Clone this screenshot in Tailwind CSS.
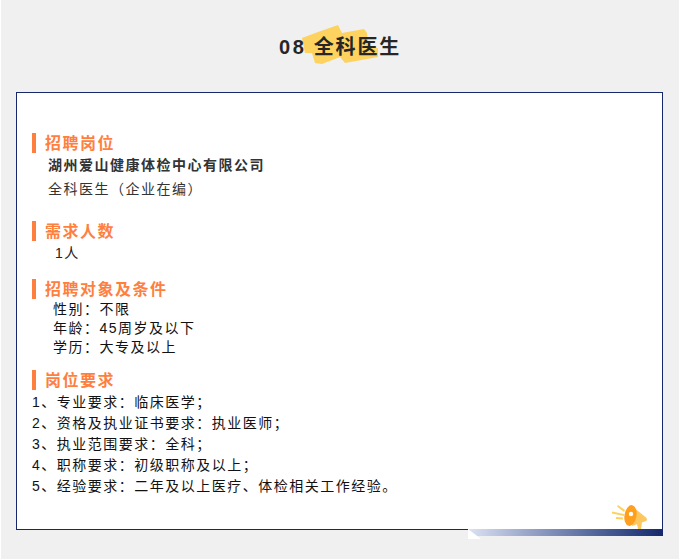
<!DOCTYPE html>
<html>
  <head>
    <meta charset="UTF-8" />
    <title>全科医生</title>
    <script src="https://cdn.jsdelivr.net/npm/@tailwindcss/browser@4"></script>
  </head>
  <body class="bg-[#f0f0f0] font-['Liberation_Sans','Noto_Sans_CJK_SC',sans-serif] overflow-hidden">
    <div class="h-[559px] w-[679px] border-l border-white pl-[15px] pr-[15px]">

      <!-- title -->
      <div class="relative h-[92px] pt-[32px] text-center">
        <svg class="absolute left-[286px] top-[24px]" width="82" height="42" viewBox="0 0 82 42">
          <path d="M0 14 L16 8 L36 1 L40 9 L62 5 L65 9 L66 24 L76 24 L76 33 L43 39 L38 33 L20 40 L13 39 L10 29 L3 29 Z" fill="#fdd25f" />
        </svg>
        <h1 class="relative text-[20px] leading-[30px] font-bold tracking-[1.8px] text-[#262626]"><span class="tracking-[2.6px]">08</span> 全科医生</h1>
      </div>

      <!-- card -->
      <div class="relative h-[438px] w-[647px] border border-[#16276b] bg-white pl-[15px] pt-[40px] text-[14px] tracking-[1.5px] text-[#222]">

        <h2 class="flex h-[20px] items-center border-l-4 border-[#ff7f3f] pl-[9px] pt-[1px] text-[16px] leading-[20px] font-bold tracking-[1.5px] text-[#ff7f3f]">招聘岗位</h2>
        <p class="pl-[16px] pt-[2px] leading-[20px] font-bold text-[#333]">湖州爱山健康体检中心有限公司</p>
        <p class="pl-[16px] pt-[4px] leading-[20px] text-[#333]">全科医生（企业在编）</p>

        <h2 class="mt-[22px] flex h-[20px] items-center border-l-4 border-[#ff7f3f] pl-[9px] pt-[1px] text-[16px] leading-[20px] font-bold tracking-[1.5px] text-[#ff7f3f]">需求人数</h2>
        <p class="pl-[23px] pt-[2px] leading-[20px]">1人</p>

        <h2 class="mt-[16px] flex h-[20px] items-center border-l-4 border-[#ff7f3f] pl-[9px] pt-[1px] text-[16px] leading-[20px] font-bold tracking-[1.5px] text-[#ff7f3f]">招聘对象及条件</h2>
        <div class="pl-[21px] pt-[1px] leading-[19px] text-[#111]">
          <p>性别：不限</p>
          <p>年龄：45周岁及以下</p>
          <p>学历：大专及以上</p>
        </div>

        <h2 class="mt-[13px] flex h-[20px] items-center border-l-4 border-[#ff7f3f] pl-[9px] pt-[1px] text-[16px] leading-[20px] font-bold tracking-[1.5px] text-[#ff7f3f]">岗位要求</h2>
        <div class="pt-[2px] leading-[21px] text-[#111]">
          <p>1、专业要求：临床医学；</p>
          <p>2、资格及执业证书要求：执业医师；</p>
          <p>3、执业范围要求：全科；</p>
          <p>4、职称要求：初级职称及以上；</p>
          <p>5、经验要求：二年及以上医疗、体检相关工作经验。</p>
        </div>

        <!-- megaphone -->
        <svg class="absolute right-[14px] bottom-0" width="36" height="26" viewBox="0 0 36 26">
          <path d="M21 4 L34 14.5 Q36 17 34 18 L20 23 Z" fill="#fdc65f" />
          <path d="M25 21 L30 19 L29 26 L26 26 Z" fill="#fdc65f" />
          <ellipse cx="18.5" cy="12.5" rx="6" ry="10.5" transform="rotate(10 18.5 12.5)" fill="#ff9f1c" />
          <circle cx="19" cy="11" r="2.2" fill="#fff" />
          <path d="M6 2 L13 7 L12 9 L5 3.5 Z M0 8.5 L12 11 L12 13 L0 10.5 Z M4 14 L11 14.5 L11 16.5 L4 16 Z" fill="#fdd25f" />
        </svg>

        <!-- bar under the card -->
        <div class="absolute left-[451px] top-full h-[7px] w-[195px] bg-gradient-to-r from-[#dde2f3] to-[#16276b]"></div>
        <svg class="absolute left-[451px] top-full" width="13" height="10" viewBox="0 0 13 10">
          <path d="M0 0 L13 10 L0 10 Z" fill="#fff" />
        </svg>
      </div>

    </div>
  </body>
</html>
